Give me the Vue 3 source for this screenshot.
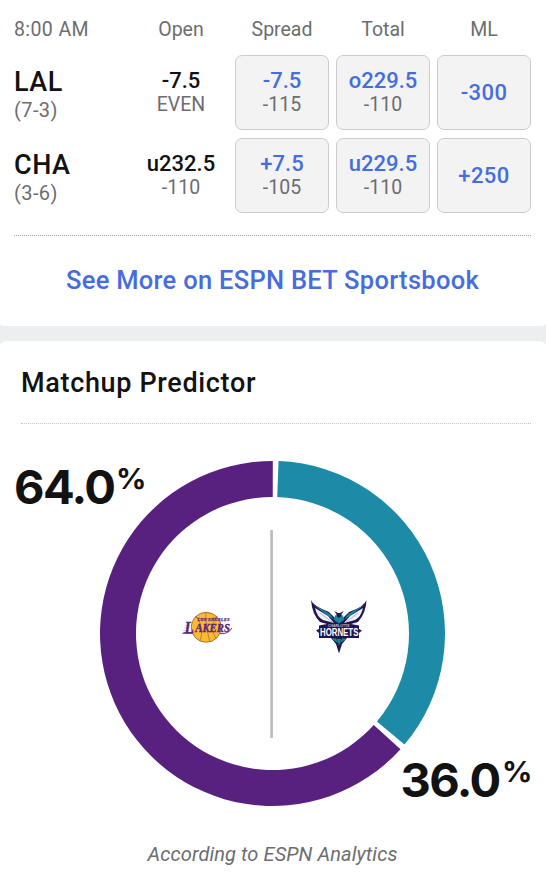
<template>
  <div class="page">
    <section class="card odds">
      <div class="odds-grid odds-head">
        <span class="time">8:00 AM</span>
        <span>Open</span>
        <span>Spread</span>
        <span>Total</span>
        <span>ML</span>
      </div>

      <div v-for="team in teams" :key="team.abbr" class="odds-grid odds-row">
        <div class="team">
          <span class="abbr">{{ team.abbr }}</span>
          <span class="record">{{ team.record }}</span>
        </div>
        <div
          v-for="(cell, i) in team.cells"
          :key="i"
          class="cell"
          :class="{ boxed: i > 0 }"
        >
          <span class="line">{{ cell[0] }}</span>
          <span v-if="cell[1]" class="price">{{ cell[1] }}</span>
        </div>
      </div>

      <a class="more"><span>See More on ESPN BET Sportsbook</span></a>
    </section>

    <section class="card predictor">
      <h2><span>Matchup Predictor</span></h2>

      <div class="chart">
        <svg class="donut" viewBox="0 0 345 345">
          <path :d="arc(132.1, 360.1)" fill="#59217f" />
          <path :d="arc(2, 130.1)" fill="#1d8ba8" />
          <rect x="170.3" y="69" width="2.6" height="208" fill="#bababa" />
        </svg>

        <svg class="logo lakers" viewBox="0 0 50 32">
          <circle cx="23.2" cy="16.3" r="15" fill="#fdb933" stroke="#75551e" stroke-width=".7" />
          <path
            d="M12 6Q23 10 34.5 6M23 1.3Q22 14 27 31M13 5Q22 17 17 29.8M34 5.5Q26 17 33 27.8"
            fill="none"
            stroke="#8a6220"
            stroke-width=".6"
          />
          <path d="M3 11.5H9M2 14.5H7M1 17H6M0 19.5H5" stroke="#bca7cc" stroke-width=".6" />
          <text x="14.6" y="9.8" class="la-city">LOS ANGELES</text>
          <text transform="translate(1.6 22) scale(.95 1)" class="la-l">L</text>
          <text transform="translate(12.2 21) scale(.8 1)" class="la-name">AKERS</text>
          <path d="M0 21.6H11L9.6 22.8H-.8Z" fill="#552583" />
          <path d="M37 22.6Q45.5 23.4 48.8 17" fill="none" stroke="#552583" stroke-width=".9" />
        </svg>

        <svg class="logo hornets" viewBox="0 0 58 54">
          <path
            d="M1 0Q3 6 19 12L26 19L26.5 14L24 11L28 13H30L34 11L31.5 14L32 19L39 12Q54 7 56.5 0Q56 13 48 22L41 24L49 25.5V29L52 30.5L49 33V38H37L32 44L29 53.5L26 44L21 38H9V33L6 30.5L9 29V25.5L17 24L10 22Q2 14 1 0Z"
            fill="#211451"
          />
          <path d="M3 4.5L20 14L24 20L17 15ZM55 4.5L38 14L34 20L41 15Z" fill="#168a9b" />
          <path d="M5 8L18 16L24 23L13 20Q7 17 5 8ZM53 8L40 16L34 23L45 20Q51 17 53 8Z" fill="#f1eff5" />
          <path d="M10 13L22 22M48 13L36 22" stroke="#9aa3b5" stroke-width=".7" />
          <path d="M25 15L29 18L33 15L34 20L29 23.5L24 20Z" fill="#168a9b" />
          <path d="M21 38.5H26L28 43ZM37 38.5H32L30 43ZM27 39H31L29 46Z" fill="#168a9b" />
          <text x="18" y="27.2" class="ch-city">CHARLOTTE</text>
          <text transform="translate(10 36) scale(.77 1)" class="ch-name">HORNETS</text>
        </svg>

        <div class="pct away">64.0<span>%</span></div>
        <div class="pct home">36.0<span>%</span></div>
      </div>

      <p class="source"><span>According to ESPN Analytics</span></p>
    </section>
  </div>
</template>

<script setup>
const teams = [
  {
    abbr: 'LAL',
    record: '(7-3)',
    cells: [['-7.5', 'EVEN'], ['-7.5', '-115'], ['o229.5', '-110'], ['-300']],
  },
  {
    abbr: 'CHA',
    record: '(3-6)',
    cells: [['u232.5', '-110'], ['+7.5', '-105'], ['u229.5', '-110'], ['+250']],
  },
];

// Ring segment between two angles, clockwise from 12 o'clock
function arc(from, to) {
  const c = 172.5;
  const outer = 172.5;
  const inner = 136.5;
  const pt = (r, deg) => {
    const a = (deg * Math.PI) / 180;
    return `${(c + r * Math.sin(a)).toFixed(2)} ${(c - r * Math.cos(a)).toFixed(2)}`;
  };
  const large = to - from > 180 ? 1 : 0;
  return `M${pt(outer, from)}A${outer} ${outer} 0 ${large} 1 ${pt(outer, to)}L${pt(inner, to)}A${inner} ${inner} 0 ${large} 0 ${pt(inner, from)}Z`;
}
</script>

<style>
body {
  background: #edeef0;
}
</style>

<style scoped>
.page {
  display: flex;
  flex-direction: column;
  gap: 15px;
  height: 874px;
  overflow: hidden;
  background: #edeef0;
  font-family: Roboto, 'Liberation Sans', sans-serif;
  color: #121213;
}

.card {
  box-sizing: border-box;
  background: #fff;
}

.odds {
  height: 326px;
  padding: 0 15px 0 14px;
  border-radius: 0 0 7px 7px / 0 0 2px 2px;
}

.odds-grid {
  display: grid;
  grid-template-columns: 113px repeat(4, 94px);
  column-gap: 7px;
}

.odds-head {
  height: 55px;
  padding-top: 18px;
  box-sizing: border-box;
  font-size: 19.5px;
  line-height: 24px;
  color: #6c6d6f;
  text-align: center;
}

.odds-head .time {
  text-align: left;
  letter-spacing: 0.4px;
}

.odds-row {
  height: 75px;
  margin-bottom: 8px;
}

.team {
  display: flex;
  flex-direction: column;
  padding-top: 12px;
}

.abbr {
  font-size: 27px;
  line-height: 30px;
  font-weight: 500;
  letter-spacing: 0.5px;
}

.record {
  font-size: 20px;
  line-height: 26px;
  letter-spacing: 0.4px;
  color: #6c6d6f;
}

.cell {
  display: flex;
  flex-direction: column;
  align-items: center;
  justify-content: center;
  box-sizing: border-box;
  height: 75px;
  padding-bottom: 2px;
  border: 1px solid transparent;
}

.cell.boxed {
  border-color: #cbccce;
  border-radius: 7px;
  background: #f3f3f3;
}

.line {
  font-size: 22px;
  line-height: 25px;
  font-weight: 500;
}

.boxed .line {
  color: #456de0;
}

.boxed .line:only-child {
  padding-top: 1px;
  letter-spacing: 0.4px;
}

.price {
  font-size: 19.5px;
  line-height: 23px;
  color: #6c6d6f;
}

.more {
  display: flex;
  justify-content: center;
  margin-top: 22px;
  padding-top: 29px;
  border-top: 1px dotted #a0a1a3;
  font-size: 25.5px;
  line-height: 30px;
  font-weight: 500;
  letter-spacing: 0.28px;
  color: #456de0;
}

.predictor {
  flex: 1;
  padding: 0 15px 0 14px;
  border-radius: 9px 9px 0 0 / 4px 4px 0 0;
}

h2 {
  box-sizing: border-box;
  height: 83px;
  margin: 0 0 0 7px;
  padding-top: 26px;
  border-bottom: 1px dotted #c4c5c7;
  font-size: 27px;
  line-height: 32px;
  font-weight: 500;
  letter-spacing: 0.66px;
}

.chart {
  position: relative;
  height: 412px;
}

.donut {
  display: block;
  width: 345px;
  height: 345px;
  margin-left: 86px;
  padding-top: 37px;
}

.logo {
  position: absolute;
  overflow: visible;
}

.lakers {
  left: 169px;
  top: 187px;
  width: 50px;
  height: 32px;
}

.hornets {
  left: 296px;
  top: 176px;
  width: 58px;
  height: 54px;
}

.la-city {
  font: italic 700 4px 'Liberation Serif', serif;
  letter-spacing: 0.5px;
  fill: #552583;
  stroke: #552583;
  stroke-width: 0.25px;
}

.la-name {
  font: italic 700 13.5px 'Liberation Serif', serif;
  fill: #552583;
  stroke: #552583;
  stroke-width: 0.35px;
}

.la-l {
  font: italic 700 16px 'Liberation Serif', serif;
  fill: #552583;
  stroke: #552583;
  stroke-width: 0.35px;
}

.ch-city {
  font: 700 3.5px 'Liberation Sans', sans-serif;
  fill: #b8bdcc;
}

.ch-name {
  font: 700 10.2px 'Liberation Sans', sans-serif;
  fill: #fff;
}

.pct {
  position: absolute;
  display: flex;
  align-items: flex-start;
  font: 700 47px/56px Inter, sans-serif;
  letter-spacing: -1.6px;
}

.pct span {
  margin-left: 2px;
  font-size: 28px;
  line-height: 41px;
  letter-spacing: 0;
  transform: scaleX(1.07);
  transform-origin: left;
}

.away {
  left: 0;
  top: 35px;
}

.home {
  right: 1px;
  top: 328px;
}

.source {
  margin: 6px 0 0;
  text-align: center;
  font-size: 20px;
  line-height: 24px;
  font-style: italic;
  letter-spacing: 0.1px;
  color: #6c6d6f;
}
</style>
